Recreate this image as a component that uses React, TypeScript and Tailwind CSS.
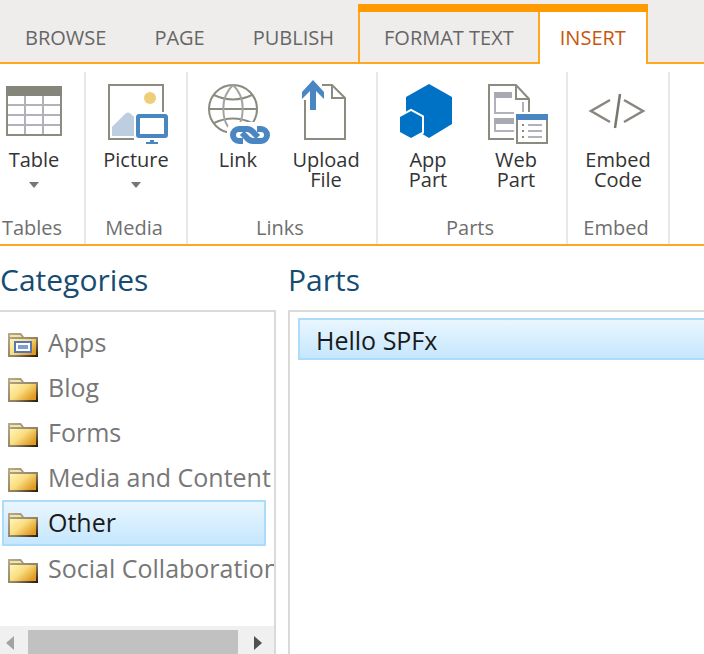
import type { ReactNode } from "react";

const GRAY = "#8b8b80";
const BLUE = "#4a86c2";
const LILAC = "#b2b2bb";

function Glyph({ children }: { children: ReactNode }) {
  return (
    <svg viewBox="0 0 64 64" className="size-16 shrink-0 overflow-visible" fill="none" aria-hidden="true">
      {children}
    </svg>
  );
}

const TableIcon = () => (
  <Glyph>
    <path d="M5 27h54M5 37h54M5 47h54M23 18v40M41 18v40" stroke={LILAC} strokeWidth="2" />
    <rect x="5" y="9" width="54" height="48" stroke={GRAY} strokeWidth="2" />
    <rect x="4" y="8" width="56" height="10" fill="#85857b" />
  </Glyph>
);

const PictureIcon = () => (
  <Glyph>
    <path d="M59 34V7H5v54h25" stroke={GRAY} strokeWidth="2" />
    <circle cx="46" cy="20" r="6" fill="#f0cd78" />
    <path d="M8 58V49L21 36q3-3 6 0l3 3v19z" fill="#bccee0" />
    <rect x="34" y="38" width="28" height="20" rx="1" stroke={BLUE} strokeWidth="4" />
    <path d="M46 62h4v2h4v2H42v-2h4z" fill={BLUE} />
  </Glyph>
);

const LinkIcon = () => (
  <Glyph>
    <g stroke={GRAY} strokeWidth="2">
      <circle cx="27" cy="31" r="24" />
      <path d="M3 31h48M8 17q19 9 38 0M8 45q19-9 38 0" />
    </g>
    <path d="M27 7C14 19 14 43 27 55M27 7c13 12 13 36 0 48" stroke="#a3a3a0" strokeWidth="2" />
    <path d="M21 50q3-6 11-6h34v26H32q-11 0-11-9z" fill="#fff" />
    <g stroke={BLUE} strokeWidth="6">
      <path d="M37 63h-4a6 6 0 0 1 0-12h8q4 0 7 4l4 4" />
      <path d="M51 51h4a6 6 0 0 1 0 12h-8q-4 0-7-4l-4-4" />
    </g>
  </Glyph>
);

const UploadIcon = () => (
  <Glyph>
    <path d="M11 22v39h40V20L38 7H28M38 7v13h13" stroke={GRAY} strokeWidth="2" />
    <path d="M19 2L30 14v7l-8-8v19h-6V13l-8 8v-7z" fill={BLUE} />
  </Glyph>
);

const AppPartIcon = () => (
  <Glyph>
    <path d="M33 6l23 13v27L33 60 10 46V19z" fill="#0072c6" />
    <path d="M15 33l11 6v15l-11 6-11-6V39z" fill="#0072c6" stroke="#fff" strokeWidth="4" />
    <path d="M15 33l11 6v15l-11 6-11-6V39z" fill="#0072c6" />
  </Glyph>
);

const WebPartIcon = () => (
  <Glyph>
    <path d="M30 61H5V7h27l13 14v13M32 7v14h13" stroke={GRAY} strokeWidth="2" />
    <path d="M10 14h18v6H10zM10 40h20v6H10z" fill="#a9a9b1" />
    <path d="M11 20v15h19M11 46v7h19M39 24v10" stroke={LILAC} strokeWidth="2" />
    <rect x="33" y="37" width="30" height="28" fill="#fff" stroke={GRAY} strokeWidth="2" />
    <rect x="32" y="36" width="32" height="6" fill={BLUE} />
    <path d="M38 47h2M38 53h2M38 59h2" stroke={GRAY} strokeWidth="2" />
    <path d="M44 47h14M44 53h14M44 59h14" stroke={LILAC} strokeWidth="2" />
  </Glyph>
);

const EmbedIcon = () => (
  <Glyph>
    <path d="M24 22L5 33l19 11M38 22l19 11-19 11" stroke="#8a857f" strokeWidth="2.500" />
    <path d="M34 16l-5 34" stroke="#77776f" strokeWidth="2.500" />
  </Glyph>
);

function FolderPaints() {
  return (
    <svg className="absolute size-0" aria-hidden="true">
      <defs>
        <linearGradient id="folderFace" x1="0" y1="0" x2="1" y2="0.7">
          <stop offset="0" stopColor="#fff6b8" />
          <stop offset="0.5" stopColor="#fadd80" />
          <stop offset="1" stopColor="#e09a20" />
        </linearGradient>
        <linearGradient id="folderEdge" x1="0" y1="0" x2="1" y2="1">
          <stop offset="0" stopColor="#b8ab8e" />
          <stop offset="0.6" stopColor="#8f8062" />
          <stop offset="1" stopColor="#1d150a" />
        </linearGradient>
      </defs>
    </svg>
  );
}

function FolderIcon({ app }: { app: boolean }) {
  return (
    <svg viewBox="0 0 30 24" className="mt-1 h-6 w-[30px] shrink-0" aria-hidden="true">
      <path d="M0 0h13l3 4h14v20H0z" fill="url(#folderEdge)" />
      <path d="M2 2h10l2 2H2z" fill="#f3e7a8" />
      <path d="M2 6h26v16H2z" fill="url(#folderFace)" />
      {app && (
        <>
          <path d="M6 8h18v12H6z" fill="#5577b8" />
          <path d="M8 10h14v8H8z" fill="#fff" />
          <path d="M10 12h10v4H10z" fill="#7f9fd4" />
        </>
      )}
    </svg>
  );
}

function Command({ label, icon, menu = false }: { label: string; icon: ReactNode; menu?: boolean }) {
  return (
    <button type="button" className="flex w-[88px] shrink-0 flex-col items-center text-[20px] leading-5 text-[#333]">
      {icon}
      <span className="mt-2 w-min">{label}</span>
      {menu && (
        <svg viewBox="0 0 10 6" className="mt-3 h-1.5 w-2.5" fill="#777" aria-hidden="true">
          <path d="M0 0h10L5 6z" />
        </svg>
      )}
    </button>
  );
}

function Group({ name, children }: { name: string; children: ReactNode }) {
  return (
    <section aria-label={name} className="flex h-[172px] shrink-0 flex-col border-r-2 border-[#e8e8e8] px-1.5 pt-1.5">
      <div className="flex flex-1">{children}</div>
      <div className="pr-1 pb-1 text-center text-[20px] leading-6 text-[#6f6f6f]">{name}</div>
    </section>
  );
}

const categories = ["Apps", "Blog", "Forms", "Media and Content", "Other", "Social Collaboration"];

const tab = "flex items-center px-6 text-[20px] leading-6 text-[#666]";
const selected = "border-2 border-[#addcfb] bg-linear-to-b from-[#eaf6fe] to-[#c5e7fe] text-[#1a1a1a]";
const heading = "pt-3.5 pb-2.5 text-[30px] leading-10 text-[#174c72]";

export default function App() {
  return (
    <div className="flex h-screen flex-col overflow-hidden bg-white font-['Open_Sans','Noto_Sans',sans-serif]">
      <FolderPaints />
      <nav className="flex h-16 shrink-0 border-b-2 border-[#ffa71f] bg-[#efedec] pl-px">
        <button type="button" className={tab + " pt-3.5"}>BROWSE</button>
        <button type="button" className={tab + " pt-3.5"}>PAGE</button>
        <button type="button" className={tab + " pt-3.5"}>PUBLISH</button>
        <div className="mt-1 -mb-0.5 flex border-t-8 border-[#ff9b00]">
          <button type="button" className={tab + " mb-0.5 border-l-2 border-[#ffa71f] pt-0.5"}>FORMAT TEXT</button>
          <button type="button" aria-current="page" className="flex items-center border-x-2 border-[#ffa71f] bg-white px-5 text-[20px] leading-6 text-[#c8560c]">
            INSERT
          </button>
        </div>
      </nav>

      <div className="flex shrink-0 border-b-2 border-[#ffa71f] pt-2">
        <div className="-ml-4 flex">
          <Group name="Tables">
            <Command label="Table" icon={<TableIcon />} menu />
          </Group>
          <Group name="Media">
            <Command label="Picture" icon={<PictureIcon />} menu />
          </Group>
          <Group name="Links">
            <Command label="Link" icon={<LinkIcon />} />
            <Command label="Upload File" icon={<UploadIcon />} />
          </Group>
          <Group name="Parts">
            <Command label="App Part" icon={<AppPartIcon />} />
            <Command label="Web Part" icon={<WebPartIcon />} />
          </Group>
          <Group name="Embed">
            <Command label="Embed Code" icon={<EmbedIcon />} />
          </Group>
        </div>
      </div>

      <main className="flex min-h-0 flex-1 gap-3">
        <section className="flex w-[276px] shrink-0 flex-col">
          <h2 className={heading}>Categories</h2>
          <div className="shrink-0 overflow-hidden border-t-2 border-r-2 border-[#dadada] pt-2">
            <ul className="pb-[35px] text-[25px] text-[#777]">
              {categories.map((name) => (
                <li key={name}>
                  <button
                    type="button"
                    className={
                      name === "Other"
                        ? "ml-0.5 flex h-[46px] w-[264px] items-center gap-2.5 pl-1 whitespace-nowrap " + selected
                        : "flex h-[45px] items-center gap-2.5 pl-2 whitespace-nowrap"
                    }
                  >
                    <FolderIcon app={name === "Apps"} />
                    {name}
                  </button>
                </li>
              ))}
            </ul>
            <div className="flex h-[34px] items-center gap-3.5 bg-[#f0f0f0] pl-1.5">
              <svg viewBox="0 0 8 14" className="h-3.5 w-2 shrink-0" fill="#a3a3a3" aria-hidden="true">
                <path d="M8 0v14L0 7z" />
              </svg>
              <div className="h-[26px] w-[210px] shrink-0 bg-[#c1c1c1]" />
              <svg viewBox="0 0 8 14" className="ml-0.5 h-3.5 w-2 shrink-0" fill="#505050" aria-hidden="true">
                <path d="M0 0v14l8-7z" />
              </svg>
            </div>
          </div>
        </section>

        <section className="flex min-w-0 flex-1 flex-col">
          <h2 className={heading}>Parts</h2>
          <div className="-mr-1 flex-1 border-t-2 border-l-2 border-[#dadada] pt-1.5 pl-2">
            <button type="button" className={"flex h-[42px] w-full items-center pt-1 pl-4 text-[25px] " + selected}>
              Hello SPFx
            </button>
          </div>
        </section>
      </main>
    </div>
  );
}
